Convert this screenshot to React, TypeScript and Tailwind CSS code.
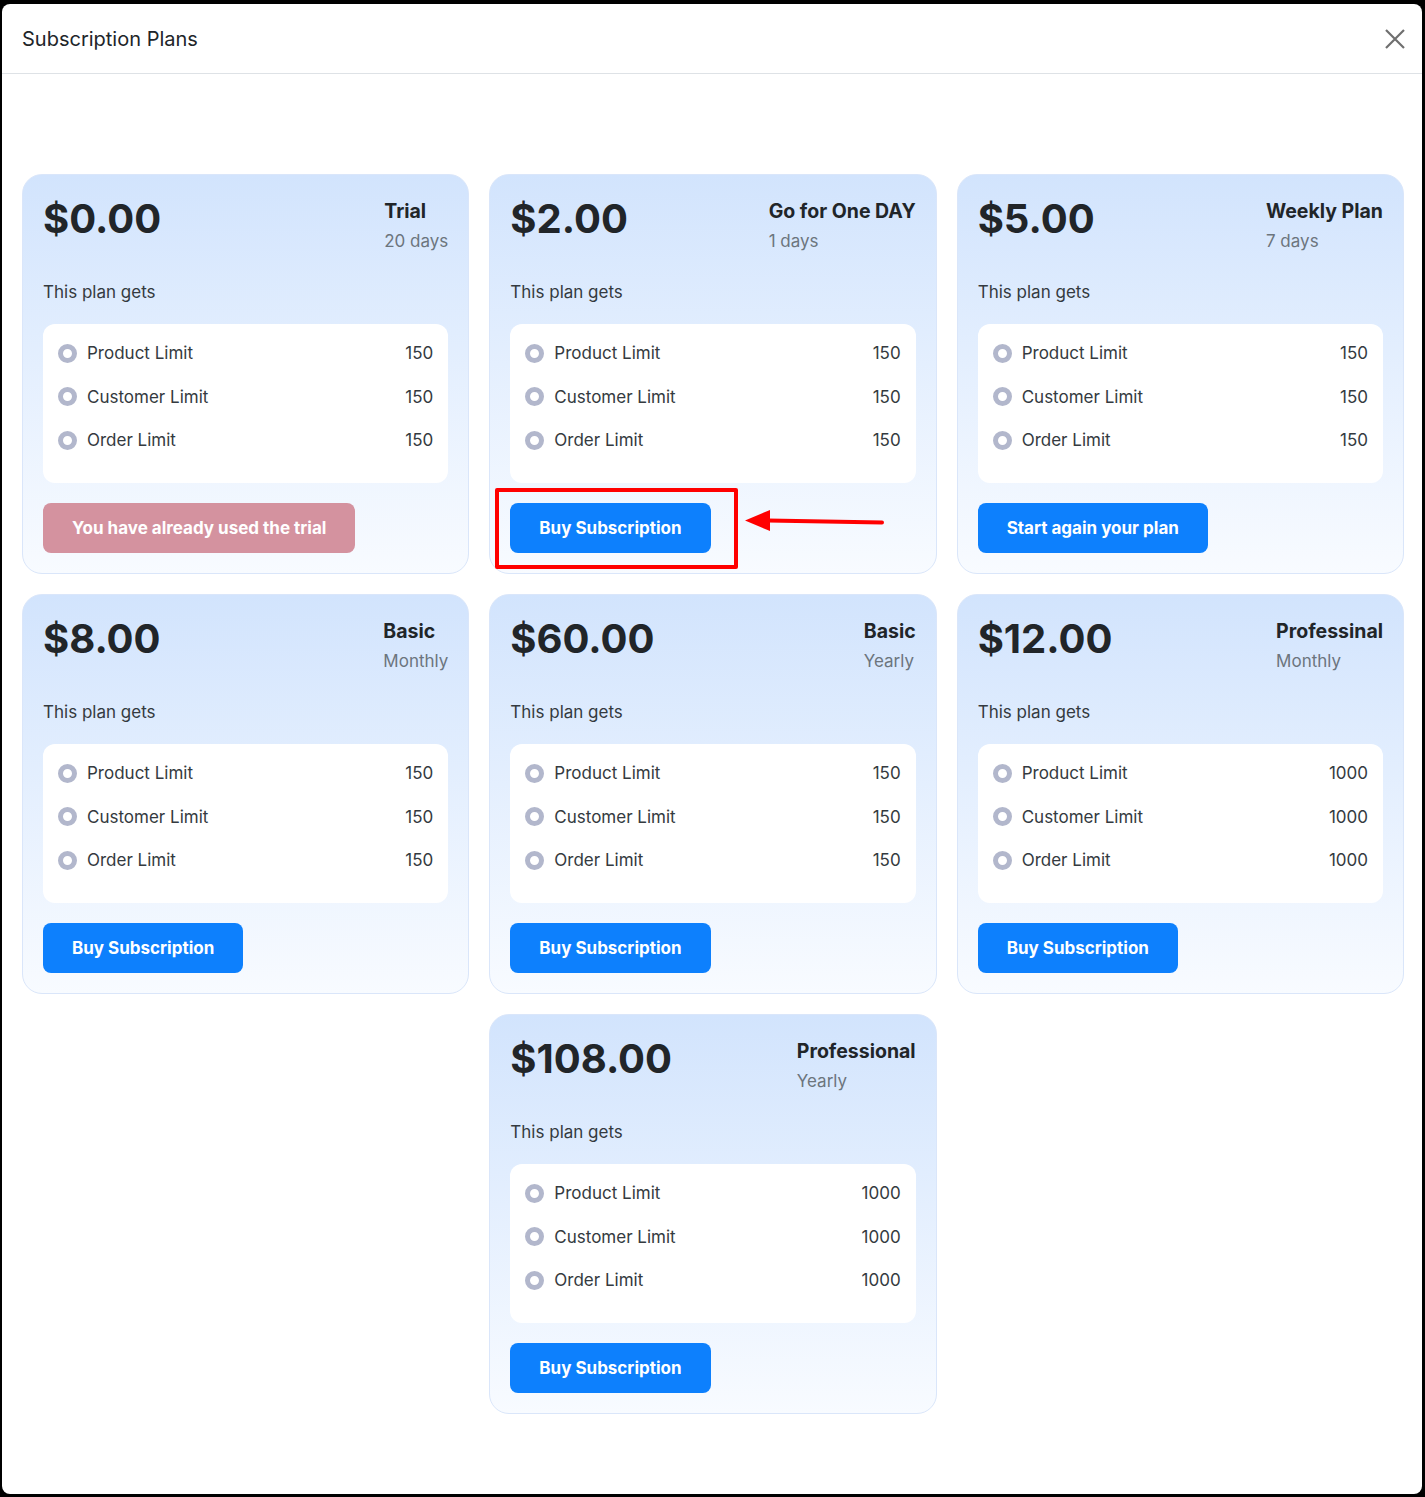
type Plan = {
  price: string
  name: string
  period: string
  limit: string
  action: "trial" | "buy" | "again"
  col?: string
}

const plans: Plan[] = [
  { price: "$0.00", name: "Trial", period: "20 days", limit: "150", action: "trial" },
  { price: "$2.00", name: "Go for One DAY", period: "1 days", limit: "150", action: "buy" },
  { price: "$5.00", name: "Weekly Plan", period: "7 days", limit: "150", action: "again" },
  { price: "$8.00", name: "Basic", period: "Monthly", limit: "150", action: "buy" },
  { price: "$60.00", name: "Basic", period: "Yearly", limit: "150", action: "buy" },
  { price: "$12.00", name: "Professinal", period: "Monthly", limit: "1000", action: "buy" },
  { price: "$108.00", name: "Professional", period: "Yearly", limit: "1000", action: "buy", col: "col-start-2" },
]

function Feature({ label, value, last }: { label: string; value: string; last?: boolean }) {
  return (
    <li className={`flex items-center justify-between leading-7 text-[17px] text-[#343a40] ${last ? "" : "mb-[15.5px]"}`}>
      <span className="flex items-center gap-[10px]">
        <span className="w-[19px] h-[19px] rounded-full border-[5px] border-[#b2b7cc] bg-white" />
        {label}
      </span>
      <span>{value}</span>
    </li>
  )
}

function PlanCard({ plan, highlight }: { plan: Plan; highlight?: boolean }) {
  const btn = "rounded-lg px-[29px] py-[11px] text-[17px] leading-7 font-bold text-white"
  return (
    <div
      className={`relative rounded-[20px] border border-[#dae6fa] bg-linear-to-b from-[#d2e4fd] to-[#f8fbff] px-5 pt-5 pb-[20px] ${plan.col ?? ""}`}
    >
      <div className="flex items-start justify-between">
        <div className="text-[40px] leading-[48px] font-bold text-[#212529]">{plan.price}</div>
        <div className="pt-[2px]">
          <div className="text-[19.5px] leading-7 font-bold text-[#212529]">{plan.name}</div>
          <div className="text-[17px] leading-7 mt-[2px] text-[#6c757d]">{plan.period}</div>
        </div>
      </div>

      <div className="mt-[23px] text-[17px] leading-7 text-[#343a40]">This plan gets</div>

      <ul className="mt-[18px] rounded-xl bg-white pt-[15px] pb-[29px] px-[15px]">
        <Feature label="Product Limit" value={plan.limit} />
        <Feature label="Customer Limit" value={plan.limit} />
        <Feature label="Order Limit" value={plan.limit} last />
      </ul>

      <div className="mt-5 flex">
        {plan.action === "trial" && (
          <button className={`${btn} bg-[#d4929f]`}>You have already used the trial</button>
        )}
        {plan.action === "buy" && <button className={`${btn} bg-[#0d80fd]`}>Buy Subscription</button>}
        {plan.action === "again" && <button className={`${btn} bg-[#0d80fd]`}>Start again your plan</button>}
      </div>

      {highlight && (
        <>
          {/* annotation: red box + arrow pointing at the button */}
          <div className="absolute left-[5px] top-[313px] w-[243px] h-[81px] border-4 border-[#ff0000] rounded-[2px] pointer-events-none" />
          <svg
            className="absolute left-[250px] top-[330px] pointer-events-none"
            width="150"
            height="30"
            viewBox="0 0 150 30"
          >
            <line x1="28" y1="15.5" x2="142" y2="17.5" stroke="#ff0000" strokeWidth="4" strokeLinecap="round" />
            <polygon points="5,15.5 30,5 30,26" fill="#ff0000" />
          </svg>
        </>
      )}
    </div>
  )
}

export default function App() {
  return (
    <div
      className="h-[1497px] bg-black pt-[4px] pl-[2px] pr-[3px] pb-[3px]"
      style={{ fontFamily: "Inter, 'Noto Sans', sans-serif" }}
    >
      <div className="h-full rounded-lg bg-white">
        <div className="flex h-[70px] items-center justify-between border-b border-[#dee2e6] pl-5 pr-[17px]">
          <h1 className="text-[20px] text-[#212529]">Subscription Plans</h1>
          <button className="text-[#6f6f6f]" aria-label="Close">
            <svg width="20" height="20" viewBox="0 0 20 20" fill="none" stroke="currentColor" strokeWidth="2.2">
              <path d="M1 1 L19 19 M19 1 L1 19" />
            </svg>
          </button>
        </div>

        <div className="grid grid-cols-3 gap-x-5 gap-y-5 pt-[100px] pl-5 pr-[18px]">
          {plans.map((p, i) => (
            <PlanCard key={i} plan={p} highlight={i === 1} />
          ))}
        </div>
      </div>
    </div>
  )
}
